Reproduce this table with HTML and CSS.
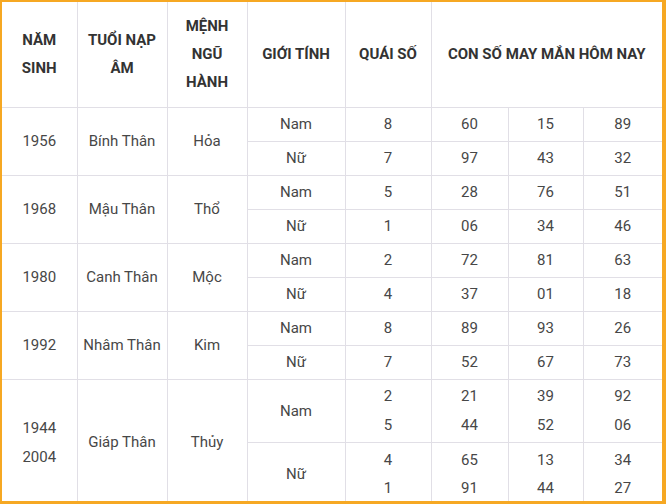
FILE: index.html
```html
<!DOCTYPE html>
<html lang="vi">
<head>
<meta charset="utf-8">
<link rel="stylesheet" href="styles.css">
</head>
<body>
<div class="frame">
<table class="lucky">
<colgroup>
<col class="c1"><col class="c2"><col class="c3"><col class="c4"><col class="c5"><col class="c6"><col class="c7"><col class="c8">
</colgroup>
<thead>
<tr class="head">
<th>NĂM<br>SINH</th>
<th>TUỔI NẠP<br>ÂM</th>
<th>MỆNH<br>NGŨ<br>HÀNH</th>
<th>GIỚI TÍNH</th>
<th>QUÁI SỐ</th>
<th colspan="3">CON SỐ MAY MẮN HÔM NAY</th>
</tr>
</thead>
<tbody>
<tr class="r"><td rowspan="2">1956</td><td rowspan="2">Bính Thân</td><td rowspan="2">Hỏa</td><td>Nam</td><td>8</td><td>60</td><td>15</td><td>89</td></tr>
<tr class="r"><td>Nữ</td><td>7</td><td>97</td><td>43</td><td>32</td></tr>
<tr class="r"><td rowspan="2">1968</td><td rowspan="2">Mậu Thân</td><td rowspan="2">Thổ</td><td>Nam</td><td>5</td><td>28</td><td>76</td><td>51</td></tr>
<tr class="r"><td>Nữ</td><td>1</td><td>06</td><td>34</td><td>46</td></tr>
<tr class="r"><td rowspan="2">1980</td><td rowspan="2">Canh Thân</td><td rowspan="2">Mộc</td><td>Nam</td><td>2</td><td>72</td><td>81</td><td>63</td></tr>
<tr class="r"><td>Nữ</td><td>4</td><td>37</td><td>01</td><td>18</td></tr>
<tr class="r"><td rowspan="2">1992</td><td rowspan="2">Nhâm Thân</td><td rowspan="2">Kim</td><td>Nam</td><td>8</td><td>89</td><td>93</td><td>26</td></tr>
<tr class="r"><td>Nữ</td><td>7</td><td>52</td><td>67</td><td>73</td></tr>
<tr class="ra"><td rowspan="2" class="ml yr">1944<br>2004</td><td rowspan="2" class="lo">Giáp Thân</td><td rowspan="2" class="lo">Thủy</td><td>Nam</td><td class="ml">2<br>5</td><td class="ml">21<br>44</td><td class="ml">39<br>52</td><td class="ml">92<br>06</td></tr>
<tr class="rb"><td>Nữ</td><td class="ml">4<br>1</td><td class="ml">65<br>91</td><td class="ml">13<br>44</td><td class="ml">34<br>27</td></tr>
</tbody>
</table>
</div>
</body>
</html>
```

FILE: styles.css
```css
html, body {
  margin: 0;
  padding: 0;
  background: #ffffff;
}

.frame {
  width: 666px;
  height: 504px;
  box-sizing: border-box;
  border-style: solid;
  border-color: #f6a823;
  border-width: 2px 4px 3px 2px;
  background: #ffffff;
  overflow: hidden;
}

.lucky {
  width: 660px;
  table-layout: fixed;
  border-collapse: collapse;
  font-family: Roboto, "Liberation Sans", Arial, sans-serif;
  font-size: 15px;
  color: #474747;
}

.c1 { width: 75px; }
.c2 { width: 90px; }
.c3 { width: 80px; }
.c4 { width: 98px; }
.c5 { width: 86px; }
.c6 { width: 77px; }
.c7 { width: 75px; }
.c8 { width: 79px; }

.lucky th,
.lucky td {
  border: 1px solid #e1dfe6;
  padding: 0;
  text-align: center;
  vertical-align: middle;
}

.lucky tr:first-child th { border-top: none; }
.lucky th:first-child,
.lucky td:first-child { border-left: none; }
.lucky th:last-child,
.lucky td:last-child { border-right: none; }
.lucky tr.rb td { border-bottom: none; }
.lucky tr.ra td:first-child { border-bottom: none; }
.lucky tr.ra td:nth-child(2),
.lucky tr.ra td:nth-child(3) { border-bottom: none; }

.head {
  height: 105px;
}

.lucky th {
  font-weight: 700;
  color: #333333;
  line-height: 28px;
}

.r { height: 34px; }
.ra { height: 63px; }
.rb { height: 59px; }

.ml { line-height: 29px; }

.lucky td.yr { padding-top: 5px; }
.lucky td.lo { padding-top: 2px; }
.lucky tr.rb td { padding-top: 3px; }
.lucky tr.rb td.ml { line-height: 28px; }
```
